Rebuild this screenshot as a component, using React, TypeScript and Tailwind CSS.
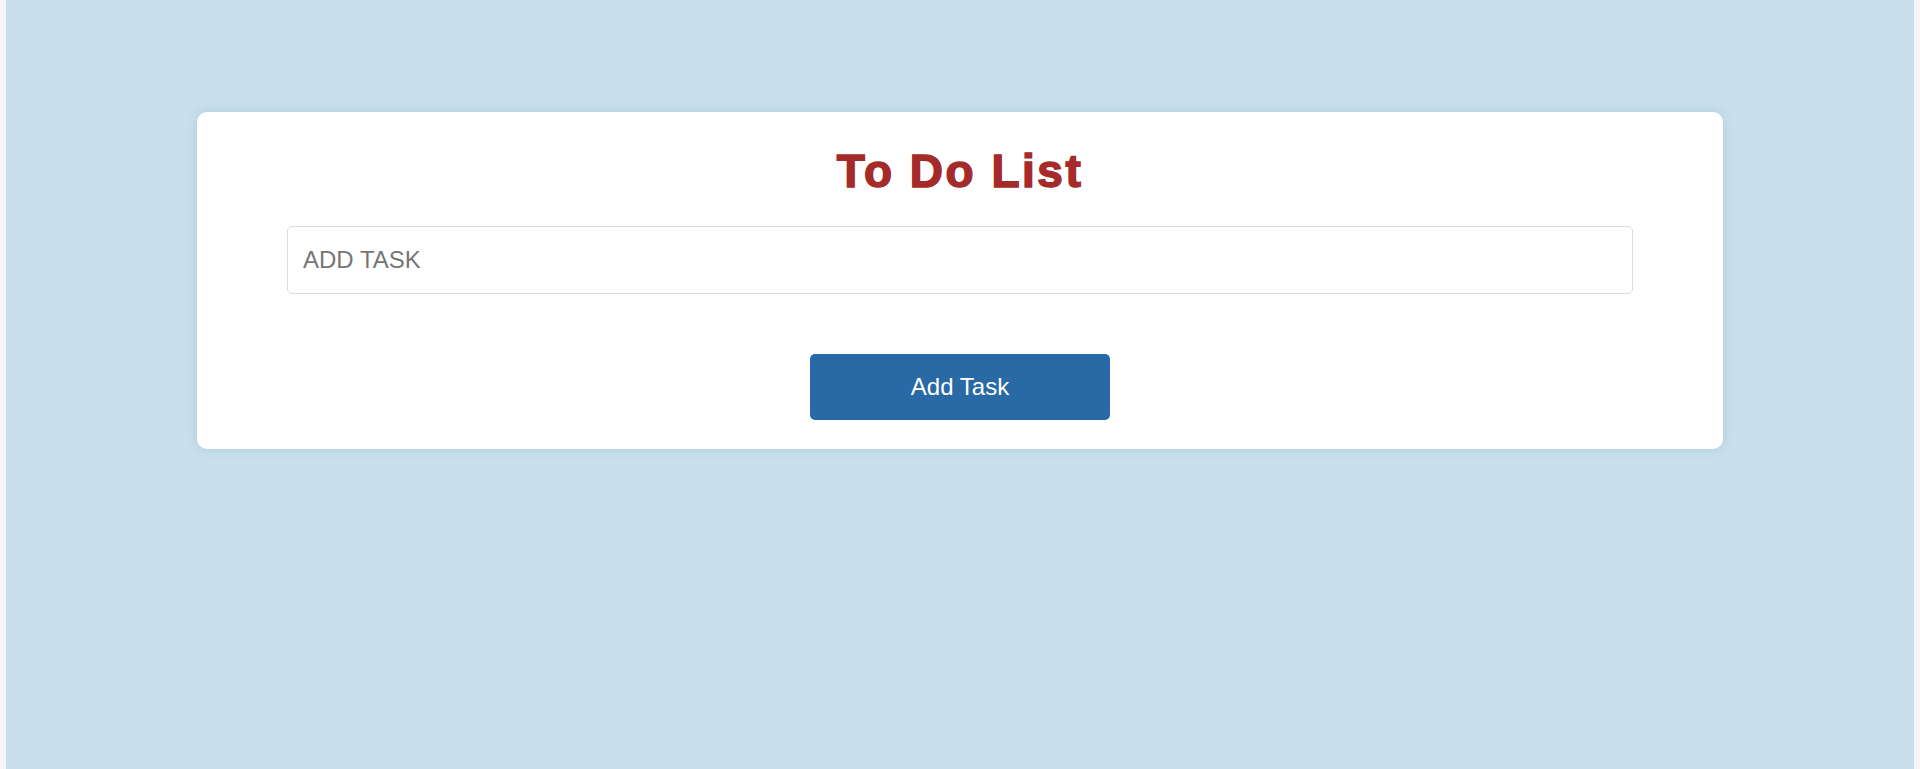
import React, { useState } from 'react';

const App: React.FC = () => {
  const [task, setTask] = useState('');

  return (
    <div className="min-h-screen bg-[#f6f6f6] px-[6px]" style={{ fontFamily: '"Liberation Sans", Arial, sans-serif' }}>
      <div className="min-h-screen bg-[#c9e0ec] pt-[112px]">
        <div className="mx-auto flex w-[1526px] flex-col items-center rounded-[10px] bg-white pt-[33px] pb-[29px] shadow-[0_0_12px_rgba(60,110,140,0.18)]">
          <h1 className="text-[46px] leading-[53px] font-bold tracking-[2.5px] text-[#a52a2a] [-webkit-text-stroke:1.5px_#a52a2a]">
            To Do List
          </h1>

          <input
            type="text"
            value={task}
            onChange={(e) => setTask(e.target.value)}
            placeholder="ADD TASK"
            className="mt-[28px] h-[68px] w-[1346px] rounded-[5px] border border-[#dcdcdc] px-[15px] text-[24px] text-[#333] outline-none placeholder:text-[#767676]"
          />

          <button
            onClick={() => setTask('')}
            className="mt-[60px] h-[66px] w-[300px] rounded-[5px] bg-[#2969a6] text-[24px] text-white"
          >
            Add Task
          </button>
        </div>
      </div>
    </div>
  );
};

export default App;
